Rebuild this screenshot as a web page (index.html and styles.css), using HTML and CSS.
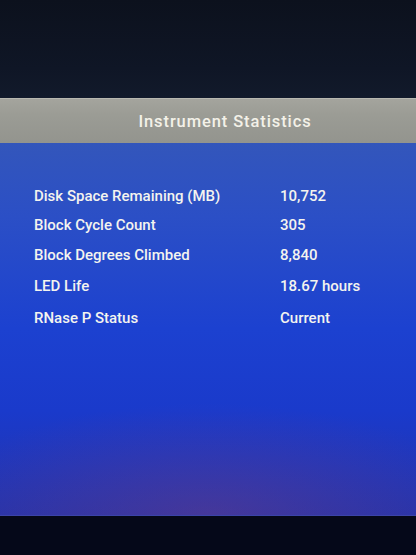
FILE: index.html
```html
<!DOCTYPE html>
<html>
<head>
<meta charset="utf-8">
<link rel="stylesheet" href="styles.css">
</head>
<body>
<div class="screen">
  <div class="top"></div>
  <div class="header"><span class="title">Instrument Statistics</span></div>
  <div class="panel">
    <div class="stats">
      <div class="row r1"><span class="label">Disk Space Remaining (MB)</span><span class="value">10,752</span></div>
      <div class="row r2"><span class="label">Block Cycle Count</span><span class="value">305</span></div>
      <div class="row r3"><span class="label">Block Degrees Climbed</span><span class="value">8,840</span></div>
      <div class="row r4"><span class="label">LED Life</span><span class="value">18.67 hours</span></div>
      <div class="row r5"><span class="label">RNase P Status</span><span class="value">Current</span></div>
    </div>
  </div>
  <div class="bottom"></div>
</div>
</body>
</html>
```
FILE: styles.css
```css
html, body {
  margin: 0;
  padding: 0;
  background: #070a18;
}
.screen {
  width: 416px;
  height: 555px;
  display: flex;
  flex-direction: column;
  overflow: hidden;
  font-family: Roboto, "Liberation Sans", sans-serif;
}
.top {
  height: 98px;
  background: linear-gradient(180deg, #0c111d 0%, #0f1626 70%, #121a2b 100%);
}
.header {
  height: 45px;
  background: linear-gradient(180deg, #a4a49d 0%, #9b9c95 35%, #93948e 100%);
  border-top: 1px solid #b8b8b0;
  box-sizing: border-box;
  display: flex;
  align-items: center;
  justify-content: center;
  padding-left: 34px;
}
.title {
  color: #f3f1e8;
  font-size: 16.5px;
  letter-spacing: 0.9px;
  font-weight: 500;
}
.panel {
  flex: 1;
  background:
    radial-gradient(ellipse 70% 30% at 50% 100%, rgba(110, 60, 130, 0.45), rgba(110,60,130,0) 100%),
    linear-gradient(180deg, #3356bb 0%, #2b4fc6 20%, #1c41d0 50%, #1a3acb 72%, #2333ad 100%);
  padding-top: 38px;
}
.stats {
  display: flex;
  flex-direction: column;
  padding-left: 34px;
}
.row {
  display: grid;
  grid-template-columns: 246px 1fr;
  height: 29px;
  align-items: center;
  color: #f4f4ef;
  font-size: 15px;
  font-weight: 500;
}
.r3 { height: 31px; }
.r4, .r5 { height: 32px; }
.label, .value { white-space: nowrap; }
.bottom {
  height: 39px;
  background: #050819;
  border-top: 1px solid #3b44a8;
}
```
